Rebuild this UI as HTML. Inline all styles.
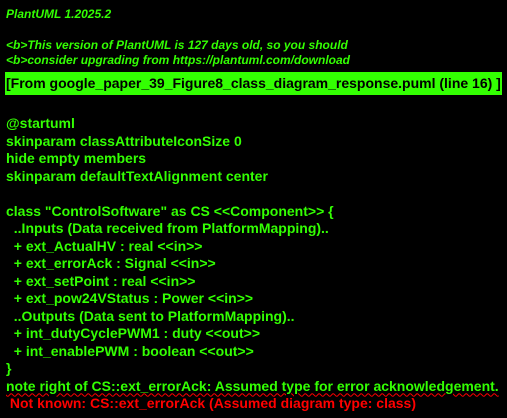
<!DOCTYPE html>
<html><head><style>
html,body{margin:0;padding:0;background:#000;width:507px;height:418px;overflow:hidden}
body{position:relative;font-family:"Liberation Sans",sans-serif;font-weight:bold}
.t{position:absolute;left:6px;color:#33ff02;white-space:pre;font-size:14px;line-height:17.5px}
.i{font-style:italic;font-size:12px;line-height:14px}
.box{position:absolute;left:5px;top:72px;width:497px;height:23px;background:#33ff02}
.r{color:#ff0000}
.u{text-decoration:underline wavy #ff0000;text-decoration-thickness:1px;text-underline-offset:2px}
</style></head><body>
<div class="t i" style="top:7px">PlantUML 1.2025.2</div>
<div class="t i" style="top:38px">&lt;b&gt;This version of PlantUML is 127 days old, so you should</div>
<div class="t i" style="top:53px">&lt;b&gt;consider upgrading from https://plantuml.com/download</div>
<div class="box"></div>
<div class="t" style="top:75px;color:#000">[From google_paper_39_Figure8_class_diagram_response.puml (line 16) ]</div>
<div class="t" style="top:115px">@startuml
skinparam classAttributeIconSize 0
hide empty members
skinparam defaultTextAlignment center

class "ControlSoftware" as CS &lt;&lt;Component&gt;&gt; {
  ..Inputs (Data received from PlatformMapping)..
  + ext_ActualHV : real &lt;&lt;in&gt;&gt;
  + ext_errorAck : Signal &lt;&lt;in&gt;&gt;
  + ext_setPoint : real &lt;&lt;in&gt;&gt;
  + ext_pow24VStatus : Power &lt;&lt;in&gt;&gt;
  ..Outputs (Data sent to PlatformMapping)..
  + int_dutyCyclePWM1 : duty &lt;&lt;out&gt;&gt;
  + int_enablePWM : boolean &lt;&lt;out&gt;&gt;
}
<span class="u">note right of CS::ext_errorAck: Assumed type for error acknowledgement.</span>
<span class="r"> Not known: CS::ext_errorAck (Assumed diagram type: class)</span></div>
</body></html>
